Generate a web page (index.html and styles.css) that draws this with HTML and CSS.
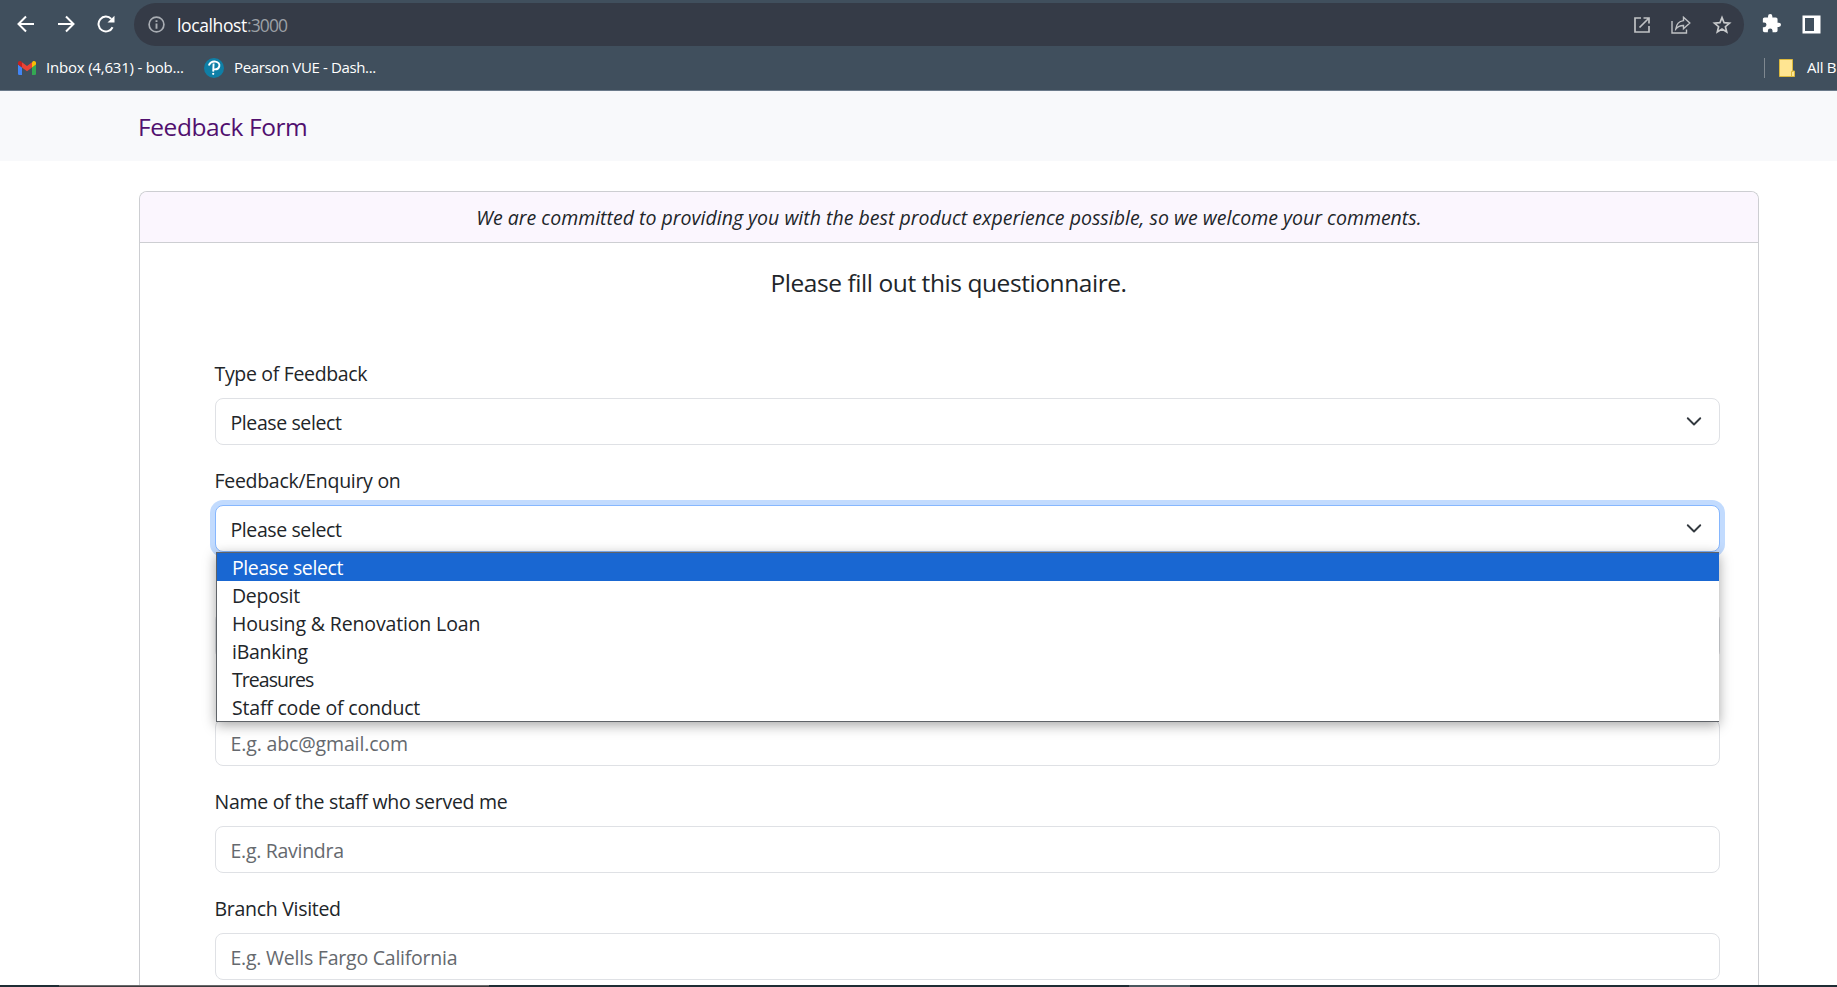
FILE: index.html
```html
<!DOCTYPE html>
<html lang="en">
<head>
<meta charset="utf-8">
<title>Feedback Form</title>
<link rel="stylesheet" href="styles.css">
</head>
<body>
<div class="window">
  <header class="chrome">
    <div class="toolbar">
      <div class="nav-icons">
        <svg width="18" height="18" viewBox="0 0 18 18"><path d="M17 9H2M9 1.500 1.500 9 9 16.500" fill="none" stroke="#fff" stroke-width="2"/></svg>
        <svg width="18" height="18" viewBox="0 0 18 18"><path d="M1 9H16M9 1.500 16.500 9 9 16.500" fill="none" stroke="#fff" stroke-width="2"/></svg>
        <svg width="18" height="18" viewBox="0 0 18 18"><path d="M15.600 12.200A7.400 7.400 0 1 1 14.300 3.900" fill="none" stroke="#fff" stroke-width="2"/><path d="M17.500.8V7.500H10.500Z" fill="#fff"/></svg>
      </div>
      <div class="address">
        <svg class="info" width="17" height="17" viewBox="0 0 17 17"><circle cx="8.500" cy="8.500" r="7.400" fill="none" stroke="#a9adb3" stroke-width="1.700"/><path d="M8.500 7.500V12.800M8.500 4.200V6" stroke="#a9adb3" stroke-width="1.900"/></svg>
        <span class="host">localhost</span><span class="port">:3000</span>
        <div class="address-actions">
          <svg width="16" height="16" viewBox="0 0 16 16" fill="none" stroke="#c0c2c5" stroke-width="1.700"><path d="M7 1H1V15H15V9M9.500 1H15V6.500M15 1 5.500 10.500"/></svg>
          <svg width="20" height="18" viewBox="0 0 20 18" fill="none" stroke="#c0c2c5" stroke-width="1.400"><path d="M1 5V17H15.500V13.500"/><path d="M12.500 1.300 18.800 7 12.500 12.700V9.500C9 9.400 6.800 10.600 4.800 13 5.300 8.800 7.500 5.200 12.500 4.600Z"/></svg>
          <svg width="20" height="20" viewBox="0 0 20 20" fill="none" stroke="#c8cacc" stroke-width="1.700"><path d="M10 2.600 12.100 7.700 17.500 8.100 13.400 11.700 14.700 17 10 14.100 5.300 17 6.600 11.700 2.500 8.100 7.900 7.700Z"/></svg>
        </div>
      </div>
      <svg class="puzzle" width="19" height="19" viewBox="0 0 22 22"><path fill="#fff" d="M19.500 10H18V6c0-1.100-.9-2-2-2h-4V2.500a2.500 2.500 0 0 0-5 0V4H3C1.900 4 1 4.900 1 6v3.800h1.500a2.700 2.700 0 0 1 0 5.400H1V19c0 1.100.9 2 2 2h3.800v-1.500a2.700 2.700 0 0 1 5.400 0V21H16c1.100 0 2-.9 2-2v-4h1.500a2.500 2.500 0 0 0 0-5z"/></svg>
      <svg class="panel" width="19" height="19" viewBox="0 0 19 19"><path fill="#fff" fill-rule="evenodd" d="M.5.500H18.500V18.500H.5ZM3 3V16H12V3Z"/></svg>
    </div>
    <div class="bookmarks">
      <svg class="gmail" width="18" height="14" viewBox="0 0 18 14"><path fill="#4285f4" d="M0 3.500 4 6.500V14H1.200Q0 14 0 12.800Z"/><path fill="#34a853" d="M18 3.500 14 6.500V14H16.800Q18 14 18 12.800Z"/><path fill="#ea4335" d="M4 1.200 9 5 14 1.200V6.500L9 10.200 4 6.500Z"/><path fill="#c5221f" d="M0 2C0 .3 2 -.5 3.300.6L4 1.200V6.500L0 3.500Z"/><path fill="#fbbc04" d="M18 2C18 .3 16 -.5 14.700.6L14 1.200V6.500L18 3.500Z"/></svg>
      <span class="bm bm-inbox">Inbox (4,631) - bob...</span>
      <svg class="pearson" width="20" height="20" viewBox="0 0 20 20"><circle cx="10" cy="10" r="10" fill="#0f7fa6"/><path d="M4.800 7.500C6 4.500 9 3.300 11.500 3.600 14.500 4 15.800 6 15.300 8.200 14.700 10.700 12 11.700 9.300 11.200M9.600 5.500 9.200 13.600" fill="none" stroke="#fff" stroke-width="1.900"/><circle cx="9.200" cy="15.800" r="1.100" fill="#fff"/></svg>
      <span class="bm bm-pearson">Pearson VUE - Dash...</span>
      <span class="divider"></span>
      <svg class="folder" width="16" height="18" viewBox="0 0 16 18"><path fill="#ffe592" stroke="#dcb93c" d="M.5.500H13.500V12H15.500V17.500H.5Z"/><path d="M12.500 17V12.500H14" fill="none" stroke="#dcb93c"/></svg>
      <span class="bm">All B</span>
    </div>
  </header>

  <nav class="navbar"><a class="brand">Feedback Form</a></nav>

  <main class="card">
    <div class="card-header">We are committed to providing you with the best product experience possible, so we welcome your comments.</div>
    <div class="card-body">
      <h1 class="title">Please fill out this questionnaire.</h1>
      <div class="field">
        <label class="label type">Type of Feedback</label>
        <div class="control select"><span class="tight">Please select</span>
          <svg class="chevron" width="20" height="20" viewBox="0 0 16 16"><path fill="none" stroke="#343a40" stroke-linecap="round" stroke-linejoin="round" stroke-width="1.500" d="m3 5 5 5 5-5"/></svg>
        </div>
      </div>
      <div class="field">
        <label class="label">Feedback/Enquiry on</label>
        <div class="control select focused"><span class="tight">Please select</span>
          <svg class="chevron" width="20" height="20" viewBox="0 0 16 16"><path fill="none" stroke="#343a40" stroke-linecap="round" stroke-linejoin="round" stroke-width="1.500" d="m3 5 5 5 5-5"/></svg>
          <ul class="menu">
            <li class="option active tight">Please select</li>
            <li class="option">Deposit</li>
            <li class="option loose">Housing &amp; Renovation Loan</li>
            <li class="option">iBanking</li>
            <li class="option tightest">Treasures</li>
            <li class="option staff">Staff code of conduct</li>
          </ul>
        </div>
      </div>
      <div class="field"><div class="label"></div><div class="control"></div></div>
      <div class="field"><div class="label"></div><div class="control placeholder loose">E.g. abc@gmail.com</div></div>
      <div class="field"><label class="label">Name of the staff who served me</label><div class="control placeholder">E.g. Ravindra</div></div>
      <div class="field"><label class="label">Branch Visited</label><div class="control placeholder wells">E.g. Wells Fargo California</div></div>
    </div>
  </main>

  <footer class="taskbar"><span class="task-window"></span><span class="task-active"></span></footer>
</div>
</body>
</html>
```
FILE: styles.css
```css
* { box-sizing: border-box; }
body { margin: 0; background: #fff; color: #212529; font-family: "Open Sans", "Noto Sans", sans-serif; font-size: 19.5px; }
svg { display: block; flex: none; }
.window { display: flex; flex-direction: column; height: 987px; overflow: hidden; }

/* Browser chrome */
.chrome { flex: none; height: 91px; background: #404f5d; border-bottom: 1px solid #6b7a8a; color: #fff; overflow: hidden; }
.toolbar { display: flex; align-items: center; height: 46px; padding-top: 3px; }
.nav-icons { display: flex; gap: 22px; padding-left: 17px; width: 134px; flex: none; margin-top: -2px; }
.address { display: flex; align-items: center; width: 1610px; height: 43px; padding-left: 14px; border-radius: 22px; background: #353b47; font-size: 17.5px; flex: none; }
.info { margin-right: 12px; }
.host { letter-spacing: -.38px; }
.port { color: #9ca0a6; letter-spacing: -.85px; }
.address-actions { display: flex; align-items: center; gap: 21px; margin-left: auto; padding-right: 12px; }
.puzzle { margin: -3px 0 0 18px; }
.panel { margin: -1px 0 0 21px; }
.bookmarks { display: flex; align-items: center; height: 44px; padding-left: 18px; font-size: 15px; white-space: nowrap; }
.bm { flex: none; padding-bottom: 2px; letter-spacing: -.3px; }
.bm-inbox { margin-left: 10px; width: 158px; letter-spacing: -.2px; }
.bm-pearson { margin-left: 10px; letter-spacing: -.36px; }
.divider { width: 1px; height: 20px; margin-left: auto; background: #7f8890; flex: none; }
.folder { margin: 0 12px 0 14px; }
.bookmarks .bm:last-child { width: 30px; }

/* Page */
.navbar { flex: none; display: flex; align-items: center; height: 70px; padding-left: 138px; background: #f8f9fb; }
.brand { color: #51106f; font-size: 24.5px; letter-spacing: -.42px; }
.card { flex: 1; min-height: 0; overflow: hidden; width: 1620px; margin: 30px 0 0 139px; border: 1px solid #cdced2; border-bottom: 0; border-radius: 8px 8px 0 0; }
.card-header { display: flex; align-items: center; justify-content: center; height: 51px; border-bottom: 1px solid #cdced2; background: #fbf6fe; font-style: italic; letter-spacing: .01px; }
.card-body { padding: 25px 38px 0 75px; }
.title { margin: 0 -37px 60px -75px; font-size: 24.5px; font-weight: 400; line-height: 30px; letter-spacing: -.43px; text-align: center; }
.field { margin-bottom: 20px; letter-spacing: -.29px; }
.label { display: block; height: 30px; margin: 0 0 10px -.5px; line-height: 32px; }
.type { letter-spacing: -.33px; }
.control { position: relative; display: flex; align-items: center; height: 47px; padding: 1px 15px 0 14.5px; border: 1px solid #dfe1e5; border-radius: 8px; background: #fff; }
.select { justify-content: space-between; }
.chevron { margin-top: -1px; }
.focused { border-color: #86b7fe; box-shadow: 0 0 0 5px #c2dbfe; z-index: 2; }
.placeholder { color: #65696e; }
.tight { letter-spacing: -.4px; }
.tightest { letter-spacing: -.95px; }
.loose { letter-spacing: -.14px; }
.staff { letter-spacing: -.2px; }
.wells { letter-spacing: -.23px; }
.menu { position: absolute; top: 46px; left: 0; right: 0; margin: 0; padding: 0; list-style: none; background: #fff; border: 1px solid #5f6368; border-right-width: 0; box-shadow: 0 3px 12px rgba(0, 0, 0, .36); }
.option { height: 28px; padding-left: 15px; line-height: 29px; }
.active { background: #1967d2; color: #fff; }

/* Top edge of the desktop taskbar */
.taskbar { flex: none; display: flex; height: 2px; background: #1f2d34; }
.task-window { width: 430px; margin-left: 59px; background: #3c3b3d; border-top: 1px solid #6a696b; }
.task-active { width: 61px; margin-left: 640px; background: #4a575e; }
```
